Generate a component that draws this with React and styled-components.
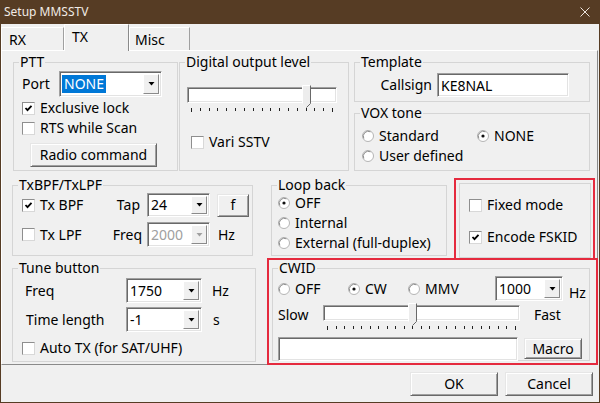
import React from 'react';
import styled, { createGlobalStyle } from 'styled-components';

const RED = '#e52a3e';

const GlobalStyle = createGlobalStyle`
  html, body {
    margin: 0;
    padding: 0;
    background: #f0f0f0;
  }
  body {
    font-family: 'Noto Sans', 'DejaVu Sans', sans-serif;
    font-size: 14px;
    color: #000;
  }
  * {
    box-sizing: border-box;
  }
`;

const Window = styled.div`
  width: 600px;
  height: 403px;
  background: #563c24;
  padding: 0 1px 1px;
  display: flex;
  flex-direction: column;
`;

const TitleBar = styled.div`
  height: 24px;
  flex: none;
  display: flex;
  align-items: center;
  justify-content: space-between;
  padding: 0 9px 0 3px;
`;

const Title = styled.span`
  font-size: 12px;
  line-height: 16px;
  color: #f1ebe5;
`;

const Body = styled.div`
  flex: 1;
  background: #f0f0f0;
  display: flex;
  flex-direction: column;
`;

const TabStrip = styled.div`
  height: 26px;
  flex: none;
  display: flex;
  align-items: flex-end;
  position: relative;
  z-index: 1;
`;

const Tab = styled.div`
  flex: none;
  width: ${(p) => p.$w}px;
  height: ${(p) => (p.$active ? 27 : 23)}px;
  margin-bottom: ${(p) => (p.$active ? -1 : 0)}px;
  background: #f0f0f0;
  border: 1px solid;
  border-bottom: none;
  border-color: #fff ${(p) => (p.$active ? '#8a8a8a' : '#a0a0a0')} transparent #fff;
  padding: 3px 0 0 ${(p) => p.$pl}px;
  line-height: 18px;
`;

const Panel = styled.div`
  flex: none;
  width: 597px;
  height: 315px;
  border: 1px solid;
  border-color: #fff #8a8a8a #8a8a8a #fff;
`;

const Row = styled.div`
  display: flex;
  align-items: flex-start;
  margin-top: ${(p) => p.$mt || 0}px;
`;

const Stack = styled.div`
  flex: none;
  display: flex;
  flex-direction: column;
  margin-left: ${(p) => p.$ml || 0}px;
`;

const Group = styled.fieldset`
  flex: none;
  margin: ${(p) => p.$mt || 0}px 0 0 ${(p) => p.$ml || 0}px;
  padding: 0;
  min-width: 0;
  width: ${(p) => p.$w}px;
  height: ${(p) => p.$h}px;
  border: 1px solid #d5d5d5;
`;

const Legend = styled.legend`
  padding: 0 1px;
  margin-left: 5px;
  line-height: 16px;
  font-size: 14px;
`;

const PlainBox = styled.div`
  width: ${(p) => p.$w}px;
  height: ${(p) => p.$h}px;
  border: 1px solid #d5d5d5;
`;

const RedFrame = styled.div`
  flex: none;
  width: ${(p) => p.$w}px;
  height: ${(p) => p.$h}px;
  margin: ${(p) => p.$mt || 0}px 0 0 ${(p) => p.$ml || 0}px;
  border: 2px solid ${RED};
  padding: ${(p) => p.$pad};
`;

const Line = styled.div`
  display: flex;
  align-items: ${(p) => (p.$top ? 'flex-start' : 'center')};
  height: ${(p) => p.$h || 20}px;
  margin-top: ${(p) => p.$mt || 0}px;
  padding-left: ${(p) => p.$pl || 0}px;
`;

const Text = styled.span`
  flex: none;
  width: ${(p) => (p.$w ? `${p.$w}px` : 'auto')};
  text-align: ${(p) => (p.$right ? 'right' : 'left')};
  padding-right: ${(p) => p.$pr || 0}px;
  margin-left: ${(p) => p.$ml || 0}px;
  margin-top: ${(p) => p.$mt || 0}px;
  line-height: 16px;
  white-space: nowrap;
`;

const Item = styled.label`
  flex: none;
  display: flex;
  align-items: center;
  width: ${(p) => (p.$w ? `${p.$w}px` : 'auto')};
  line-height: 16px;
  white-space: nowrap;
`;

const Box = styled.span`
  flex: none;
  width: 13px;
  height: 13px;
  margin-right: 5px;
  background: #fff;
  border: 1px solid;
  border-color: #8e8e8e #d8d8d8 #d8d8d8 #8e8e8e;
  display: flex;
  align-items: center;
  justify-content: center;
`;

const RadioDot = styled.svg`
  flex: none;
  margin-right: 5px;
`;

const Sunken = styled.div`
  flex: none;
  width: ${(p) => p.$w}px;
  height: ${(p) => p.$h || 24}px;
  background: #fff;
  border: 1px solid;
  border-color: #a0a0a0 #fff #fff #a0a0a0;
  box-shadow: inset 1px 1px 0 #696969, inset -1px -1px 0 #e3e3e3;
  display: flex;
  align-items: center;
  padding: 2px 2px 2px 3px;
`;

const ComboValue = styled.span`
  flex: 1;
  line-height: 16px;
  color: ${(p) => (p.$disabled ? '#a0a0a0' : '#000')};
`;

const Selected = styled.span`
  display: inline-block;
  margin-left: -1px;
  padding: 1px 2px;
  line-height: 16px;
  background: #0078d7;
  color: #fff;
`;

const DropButton = styled.span`
  flex: none;
  width: 16px;
  align-self: stretch;
  background: #f0f0f0;
  border: 1px solid;
  border-color: #fff #8a8a8a #8a8a8a #fff;
  display: flex;
  align-items: center;
  justify-content: center;
`;

const Btn = styled.div`
  flex: none;
  width: ${(p) => p.$w}px;
  height: ${(p) => p.$h || 24}px;
  margin-left: ${(p) => p.$ml || 0}px;
  margin-top: ${(p) => p.$mt || 0}px;
  background: #f0f0f0;
  border: 1px solid;
  border-color: #e6e6e6 #696969 #696969 #e6e6e6;
  box-shadow: inset 1px 1px 0 #fff, inset -1px -1px 0 #a0a0a0;
  display: flex;
  align-items: center;
  justify-content: center;
  line-height: 16px;
`;

const SliderWrap = styled.div`
  flex: none;
  width: ${(p) => p.$w}px;
  margin: ${(p) => p.$mt || 0}px 0 0 ${(p) => p.$ml || 0}px;
`;

const Track = styled.div`
  position: relative;
  height: 16px;
  background: #fff;
  border: 1px solid;
  border-color: #a0a0a0 #fff #fff #a0a0a0;
  box-shadow: inset 1px 1px 0 #696969, inset -1px -1px 0 #e3e3e3;
`;

const Thumb = styled.svg`
  position: absolute;
  top: -3px;
`;

const TickRow = styled.div`
  display: flex;
  justify-content: space-between;
  align-items: flex-start;
  padding: 0 4px;
  margin-top: 5px;
  height: 4px;
`;

const Tick = styled.span`
  width: 1px;
  height: ${(p) => (p.$long ? 4 : 3)}px;
  background: #222;
`;

const Footer = styled.div`
  flex: 1;
  display: flex;
  justify-content: flex-end;
  align-items: flex-start;
  gap: 7px;
  padding: 7px 6px 0 0;
`;

const CheckMark = () => (
  <svg width="9" height="9" viewBox="0 0 9 9">
    <polyline points="1.5,4 3.5,6.2 7.5,1.8" fill="none" stroke="#000" strokeWidth="1.8" />
  </svg>
);

const Check = ({ checked, children, w }) => (
  <Item $w={w}>
    <Box>{checked && <CheckMark />}</Box>
    {children}
  </Item>
);

const Radio = ({ checked, children, w }) => (
  <Item $w={w}>
    <RadioDot width="12" height="12" viewBox="0 0 12 12">
      <circle cx="6" cy="6" r="5.5" fill="#fff" stroke="#b4b4b4" />
      <path d="M1.8 8.5 A5 5 0 0 1 8.5 1.8" fill="none" stroke="#8e8e8e" />
      {checked && <circle cx="6" cy="6" r="1.6" fill="#111" />}
    </RadioDot>
    {children}
  </Item>
);

const Combo = ({ w, h, value, selected, disabled }) => (
  <Sunken $w={w} $h={h}>
    <ComboValue $disabled={disabled}>{selected ? <Selected>{value}</Selected> : value}</ComboValue>
    <DropButton>
      <svg width="7" height="4" viewBox="0 0 7 4">
        <polygon points="0.5,0 6.5,0 3.5,3.5" fill={disabled ? '#a0a0a0' : '#000'} />
      </svg>
    </DropButton>
  </Sunken>
);

const Slider = ({ w, ml, mt, ticks, pos }) => {
  const centre = 4 + (pos / (ticks - 1)) * (w - 8);
  return (
    <SliderWrap $w={w} $ml={ml} $mt={mt}>
      <Track>
        <Thumb width="9" height="23" viewBox="0 0 9 23" style={{ left: Math.round(centre - 5.5) }}>
          <polygon points="0.5,0.5 8.5,0.5 8.5,18.5 4.5,22.5 0.5,18.5" fill="#ededed" />
          <polyline points="0.5,18.5 0.5,0.5 8.5,0.5" fill="none" stroke="#fff" />
          <polyline points="8.5,0.5 8.5,18.5 4.5,22.5" fill="none" stroke="#696969" />
        </Thumb>
      </Track>
      <TickRow>
        {Array.from({ length: ticks }, (_, i) => (
          <Tick key={i} $long={i === 0 || i === ticks - 1} />
        ))}
      </TickRow>
    </SliderWrap>
  );
};

const CloseGlyph = () => (
  <svg width="10" height="10" viewBox="0 0 10 10">
    <path d="M0.5 0.5 L9.5 9.5 M9.5 0.5 L0.5 9.5" stroke="#ece4dc" strokeWidth="1" />
  </svg>
);

const App = () => {
  return (
    <>
      <GlobalStyle />
      <Window>
        <TitleBar>
          <Title>Setup MMSSTV</Title>
          <CloseGlyph />
        </TitleBar>
        <Body>
          <TabStrip>
            <Tab $w={63} $pl={7}>RX</Tab>
            <Tab $w={65} $pl={7} $active>TX</Tab>
            <Tab $w={61} $pl={5}>Misc</Tab>
          </TabStrip>
          <Panel>
            <Row $mt={3}>
              <Group $ml={11} $w={165} $h={117}>
                <Legend>PTT</Legend>
                <Line $mt={1} $h={26} $pl={8}>
                  <Text $w={37}>Port</Text>
                  <Combo w={103} h={26} value="NONE" selected />
                </Line>
                <Line $mt={1} $pl={8}>
                  <Check checked>Exclusive lock</Check>
                </Line>
                <Line $pl={8}>
                  <Check>RTS while Scan</Check>
                </Line>
                <Line $mt={5} $h={24} $pl={16}>
                  <Btn $w={127}>Radio command</Btn>
                </Line>
              </Group>
              <Group $ml={1} $w={170} $h={117}>
                <Legend>Digital output level</Legend>
                <Slider w={150} ml={7} mt={17} ticks={17} pos={13} />
                <Line $mt={20} $pl={11}>
                  <Check>Vari SSTV</Check>
                </Line>
              </Group>
              <Stack $ml={5}>
                <Group $w={236} $h={48}>
                  <Legend>Template</Legend>
                  <Line $mt={3} $h={24}>
                    <Text $w={82} $right $pr={5}>Callsign</Text>
                    <Sunken $w={132} $h={24}>KE8NAL</Sunken>
                  </Line>
                </Group>
                <Group $mt={3} $w={236} $h={66}>
                  <Legend>VOX tone</Legend>
                  <Line $mt={5} $pl={7}>
                    <Radio w={115}>Standard</Radio>
                    <Radio checked>NONE</Radio>
                  </Line>
                  <Line $pl={7}>
                    <Radio>User defined</Radio>
                  </Line>
                </Group>
              </Stack>
            </Row>

            <Row $mt={6}>
              <Group $ml={10} $w={241} $h={79}>
                <Legend>TxBPF/TxLPF</Legend>
                <Line $h={24} $pl={9}>
                  <Check checked w={88}>Tx BPF</Check>
                  <Text $w={37} $right $pr={7}>Tap</Text>
                  <Combo w={63} h={24} value="24" />
                  <Btn $w={32} $h={23} $ml={7}>f</Btn>
                </Line>
                <Line $mt={5} $h={25} $pl={9}>
                  <Check w={88}>Tx LPF</Check>
                  <Text $w={37} $right $pr={5}>Freq</Text>
                  <Combo w={63} h={25} value="2000" disabled />
                  <Text $ml={8}>Hz</Text>
                </Line>
              </Group>
              <Group $ml={18} $w={176} $h={79}>
                <Legend>Loop back</Legend>
                <Line $pl={6}>
                  <Radio checked>OFF</Radio>
                </Line>
                <Line $pl={6}>
                  <Radio>Internal</Radio>
                </Line>
                <Line $pl={6}>
                  <Radio>External (full-duplex)</Radio>
                </Line>
              </Group>
              <RedFrame $ml={7} $mt={1} $w={141} $h={82} $pad="3px 0 0 3px">
                <PlainBox $w={132} $h={75}>
                  <Line $mt={11} $pl={9}>
                    <Check>Fixed mode</Check>
                  </Line>
                  <Line $mt={12} $pl={9}>
                    <Check checked>Encode FSKID</Check>
                  </Line>
                </PlainBox>
              </RedFrame>
            </Row>

            <Row $mt={-2}>
              <Group $ml={10} $mt={2} $w={244} $h={102}>
                <Legend>Tune button</Legend>
                <Line $mt={2} $h={25} $pl={12}>
                  <Text $w={101}>Freq</Text>
                  <Combo w={76} h={25} value="1750" />
                  <Text $ml={10}>Hz</Text>
                </Line>
                <Line $mt={4} $h={25} $pl={13}>
                  <Text $w={100}>Time length</Text>
                  <Combo w={76} h={25} value="-1" />
                  <Text $ml={11}>s</Text>
                </Line>
                <Line $mt={6} $pl={9}>
                  <Check>Auto TX (for SAT/UHF)</Check>
                </Line>
              </Group>
              <RedFrame $ml={11} $w={331} $h={107} $pad="0 0 0 3px">
                <Group $w={318} $h={101}>
                  <Legend>CWID</Legend>
                  <Line $h={25} $pl={5}>
                    <Radio w={70}>OFF</Radio>
                    <Radio w={60} checked>CW</Radio>
                    <Radio w={87}>MMV</Radio>
                    <Combo w={68} h={25} value="1000" />
                    <Text $ml={6} $mt={8}>Hz</Text>
                  </Line>
                  <Line $mt={4} $h={25} $pl={5} $top>
                    <Text $w={45} $mt={2}>Slow</Text>
                    <Slider w={197} ticks={23} pos={10} />
                    <Text $ml={14} $mt={2}>Fast</Text>
                  </Line>
                  <Line $mt={7} $h={24} $pl={5} $top>
                    <Sunken $w={240} $h={24} />
                    <Btn $w={58} $h={21} $ml={6} $mt={1}>Macro</Btn>
                  </Line>
                </Group>
              </RedFrame>
            </Row>
          </Panel>
          <Footer>
            <Btn $w={88}>OK</Btn>
            <Btn $w={88}>Cancel</Btn>
          </Footer>
        </Body>
      </Window>
    </>
  );
};

export default App;
